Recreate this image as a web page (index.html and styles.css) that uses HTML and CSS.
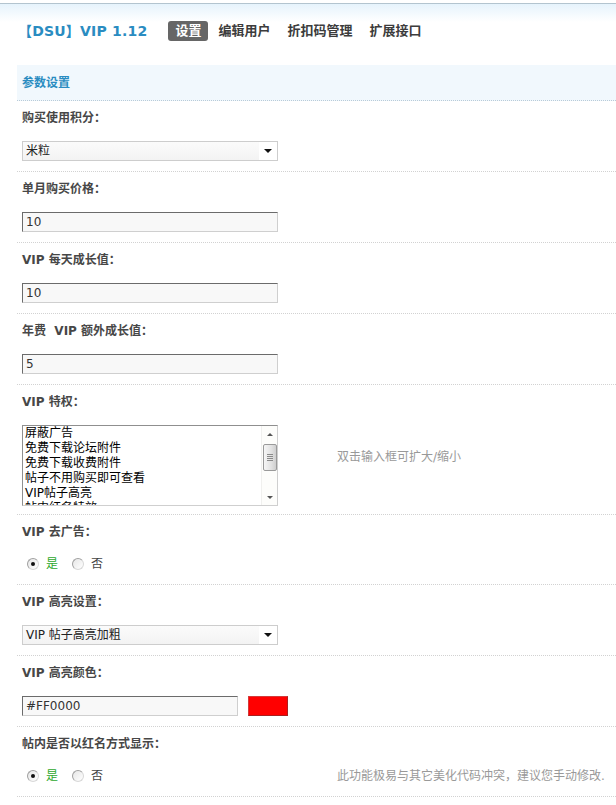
FILE: index.html
```html
<!DOCTYPE html>
<html lang="zh-CN">
<head>
<meta charset="utf-8">
<title>DSU VIP</title>
<link rel="stylesheet" href="styles.css">
</head>
<body>
<div class="page">
  <div class="top">
    <h1 class="title">【DSU】VIP 1.12</h1>
    <ul class="nav">
      <li class="nav-item active">设置</li>
      <li class="nav-item">编辑用户</li>
      <li class="nav-item">折扣码管理</li>
      <li class="nav-item">扩展接口</li>
    </ul>
  </div>

  <div class="form">
    <div class="section">参数设置</div>

    <div class="block">
      <div class="label">购买使用积分：</div>
      <div class="value">
        <div class="cell"><div class="select"><span class="select-text">米粒</span><span class="select-btn"><i class="arrow"></i></span></div></div>
      </div>
    </div>

    <div class="block">
      <div class="label">单月购买价格：</div>
      <div class="value">
        <div class="cell"><div class="input">10</div></div>
      </div>
    </div>

    <div class="block">
      <div class="label">VIP 每天成长值：</div>
      <div class="value">
        <div class="cell"><div class="input">10</div></div>
      </div>
    </div>

    <div class="block">
      <div class="label">年费&nbsp; VIP 额外成长值：</div>
      <div class="value">
        <div class="cell"><div class="input">5</div></div>
      </div>
    </div>

    <div class="block">
      <div class="label">VIP 特权：</div>
      <div class="value value-multi">
        <div class="cell">
          <div class="multi">
            <ul class="options">
              <li>屏蔽广告</li>
              <li>免费下载论坛附件</li>
              <li>免费下载收费附件</li>
              <li>帖子不用购买即可查看</li>
              <li>VIP帖子高亮</li>
              <li>帖内红名特效</li>
            </ul>
            <div class="scrollbar">
              <span class="sb-btn"><i class="sb-up"></i></span>
              <span class="sb-thumb"><i class="grip"></i><i class="grip"></i><i class="grip"></i><i class="grip"></i></span>
              <span class="sb-btn sb-bottom"><i class="sb-down"></i></span>
            </div>
          </div>
        </div>
        <div class="tip tip-multi">双击输入框可扩大/缩小</div>
      </div>
    </div>

    <div class="block block-radio">
      <div class="label">VIP 去广告：</div>
      <div class="value">
        <div class="cell radios">
          <span class="radio checked"></span><span class="radio-label on">是</span>
          <span class="radio"></span><span class="radio-label">否</span>
        </div>
      </div>
    </div>

    <div class="block">
      <div class="label">VIP 高亮设置：</div>
      <div class="value">
        <div class="cell"><div class="select"><span class="select-text">VIP 帖子高亮加粗</span><span class="select-btn"><i class="arrow"></i></span></div></div>
      </div>
    </div>

    <div class="block">
      <div class="label">VIP 高亮颜色：</div>
      <div class="value">
        <div class="cell color-cell"><div class="input input-color">#FF0000</div><span class="swatch"></span></div>
      </div>
    </div>

    <div class="block block-radio">
      <div class="label">帖内是否以红名方式显示：</div>
      <div class="value">
        <div class="cell radios">
          <span class="radio checked"></span><span class="radio-label on">是</span>
          <span class="radio"></span><span class="radio-label">否</span>
        </div>
        <div class="tip tip-radio">此功能极易与其它美化代码冲突，建议您手动修改.</div>
      </div>
    </div>
  </div>
</div>
</body>
</html>
```

FILE: styles.css
```css
* { box-sizing: border-box; }
html, body { margin: 0; padding: 0; background: #fff; }
body {
  font-family: "DejaVu Sans", "Noto Sans CJK SC", sans-serif;
  font-size: 12px;
  color: #333;
}
.page {
  min-height: 805px;
  background:
    linear-gradient(to bottom, #ffffff 0, #ffffff 3px, #b3c4cf 3px, #b3c4cf 4px, #e6f3fc 4px, #ffffff 22px) no-repeat;
  background-size: 100% 24px;
  overflow: hidden;
}

/* top */
.top {
  display: flex;
  align-items: center;
  height: 65px;
  padding: 21px 0 24px 18px;
}
.title {
  margin: 0;
  font-size: 14px;
  font-weight: bold;
  color: #2a8cc1;
  line-height: 20px;
  letter-spacing: 0.2px;
  white-space: nowrap;
}
.nav {
  display: flex;
  gap: 3px;
  list-style: none;
  margin: 0 0 0 21px;
  padding: 0;
}
.nav-item {
  height: 20px;
  line-height: 20px;
  padding: 0 7px;
  font-size: 13px;
  font-weight: bold;
  color: #3c3c3c;
  border-radius: 3px;
  white-space: nowrap;
}
.nav-item.active {
  background: #666;
  color: #fff;
}

/* form */
.form { margin-left: 17px; }
.section {
  height: 36px;
  line-height: 37px;
  padding-left: 5px;
  background: #f1f8fd;
  border-bottom: 1px dotted #b9cbd8;
  color: #2a8cc1;
  font-weight: bold;
  font-size: 12px;
}
.block { border-bottom: 1px dotted #d2d2d2; }
.label {
  height: 33px;
  padding-top: 2px;
  line-height: 31px;
  padding-left: 5px;
  font-weight: bold;
  color: #474747;
  white-space: nowrap;
}
.value {
  display: grid;
  grid-template-columns: 320px 1fr;
  padding: 7px 0 10px 0;
}
.value-multi { padding-bottom: 8px; }
.block-radio .value { padding: 7px 0 11px 0; }
.cell { padding-left: 5px; display: flex; align-items: center; }

/* input */
.input {
  width: 256px;
  height: 20px;
  line-height: 18px;
  padding: 0 3px;
  background: #f8f8f8;
  border: 1px solid #cfcfcf;
  border-top-color: #6b6b6b;
  border-left-color: #6b6b6b;
  color: #333;
  font-size: 12px;
}
.input-color { width: 216px; }
.swatch {
  display: block;
  width: 40px;
  height: 20px;
  margin-left: 10px;
  background: #ff0000;
  border: 1px solid #d43a3a;
  border-right-color: #a82020;
  border-bottom-color: #a82020;
}

/* select */
.select {
  width: 256px;
  height: 20px;
  display: flex;
  align-items: stretch;
  border: 1px solid #cdcdcd;
  background: #fff;
}
.select-text {
  flex: 1;
  line-height: 18px;
  padding-left: 3px;
  background: linear-gradient(to bottom, #fbfbfb, #f3f3f3);
  color: #222;
  white-space: nowrap;
}
.select-btn {
  width: 18px;
  display: flex;
  align-items: center;
  justify-content: center;
  background: #fff;
}
.arrow {
  width: 0;
  height: 0;
  border-left: 4px solid transparent;
  border-right: 4px solid transparent;
  border-top: 4px solid #111;
}

/* multi select */
.multi {
  width: 256px;
  height: 81px;
  display: flex;
  border: 1px solid #8f8f8f;
  border-right-color: #cfcfcf;
  border-bottom-color: #cfcfcf;
  background: #fff;
  overflow: hidden;
}
.options {
  flex: 1;
  list-style: none;
  margin: 0;
  padding: 0 0 0 2px;
  color: #000;
  font-size: 12px;
  line-height: 15px;
  white-space: nowrap;
  overflow: hidden;
}
.scrollbar {
  width: 16px;
  display: flex;
  flex-direction: column;
  align-items: center;
  background: #fdfdfb;
  border-left: 1px solid #f0f0ee;
}
.sb-btn {
  width: 15px;
  height: 16px;
  display: flex;
  align-items: center;
  justify-content: center;
}
.sb-bottom { margin-top: auto; }
.sb-up, .sb-down {
  width: 0;
  height: 0;
  border-left: 3px solid transparent;
  border-right: 3px solid transparent;
}
.sb-up { border-bottom: 3px solid #555; }
.sb-down { border-top: 3px solid #555; }
.sb-thumb {
  width: 14px;
  height: 27px;
  margin-top: 2px;
  display: flex;
  flex-direction: column;
  align-items: center;
  justify-content: center;
  gap: 1px;
  border: 1px solid #9a9a9a;
  border-radius: 2px;
  background: linear-gradient(to right, #f6f6f6, #e2e2e2 60%, #cfcfcf);
}
.grip {
  display: block;
  width: 6px;
  height: 1px;
  background: #8a8a8a;
}

/* radios */
.radios { height: 18px; }
.radio {
  width: 12px;
  height: 12px;
  margin-left: 5px;
  border-radius: 50%;
  border: 1px solid #a0a0a0;
  border-bottom-color: #d8d8d8;
  border-right-color: #d8d8d8;
  background: linear-gradient(135deg, #e6e6e6, #ffffff);
  display: flex;
  align-items: center;
  justify-content: center;
}
.radio.checked::after {
  content: "";
  width: 4px;
  height: 4px;
  border-radius: 50%;
  background: #111;
}
.radio + .radio-label { margin-left: 7px; }
.radio-label {
  color: #444;
  font-size: 12px;
  line-height: 18px;
  margin-right: 10px;
}
.radio-label.on { color: #2ea82e; }
.radio-label + .radio { margin-left: 4px; }

/* tips */
.tip {
  color: #999;
  font-size: 12px;
  line-height: 16px;
  white-space: nowrap;
}
.tip-multi { padding-top: 24px; }
.tip-radio { line-height: 18px; }
```
